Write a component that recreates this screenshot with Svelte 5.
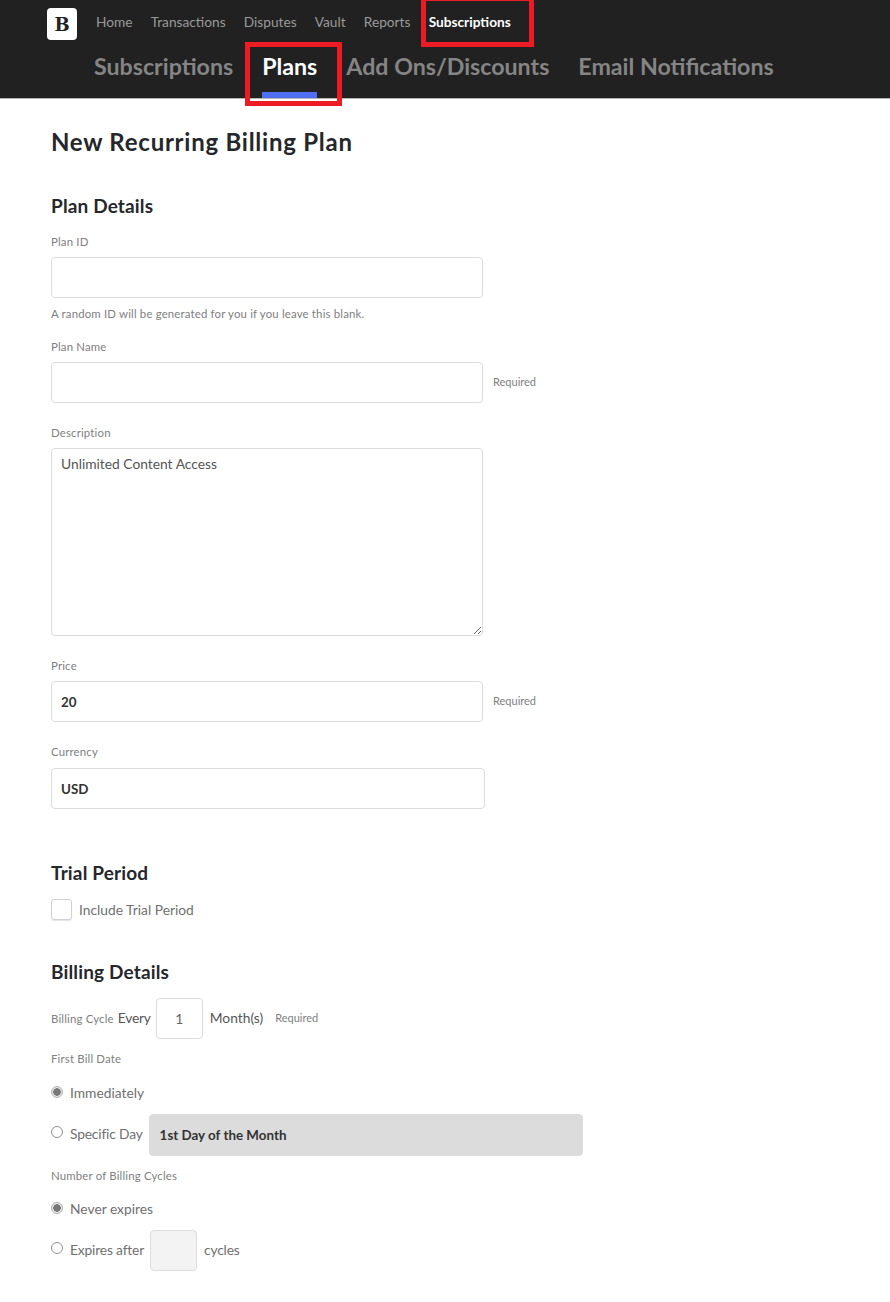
<script>
  const topLinks = ["Home", "Transactions", "Disputes", "Vault", "Reports", "Subscriptions"];
  const tabs = ["Subscriptions", "Plans", "Add Ons/Discounts", "Email Notifications"];
</script>

<header class="header">
  <div class="top-row">
    <div class="logo">B</div>
    <nav class="top-nav">
      {#each topLinks as link}
        <a href="#top" class:active={link === "Subscriptions"}>{link}</a>
      {/each}
    </nav>
  </div>
  <nav class="tabs">
    {#each tabs as tab}
      <a href="#top" class:active={tab === "Plans"}>{tab}</a>
    {/each}
  </nav>
  <!-- annotation boxes drawn over the screenshot -->
  <div class="mark mark-sub"></div>
  <div class="mark mark-plans"></div>
</header>

<main class="page">
  <h1>New Recurring Billing Plan</h1>

  <h2 class="plan-details">Plan Details</h2>
  <label class="label first" for="plan-id">Plan ID</label>
  <input id="plan-id" class="text" type="text" />
  <p class="hint">A random ID will be generated for you if you leave this blank.</p>

  <label class="label name" for="plan-name">Plan Name</label>
  <div class="with-note">
    <input id="plan-name" class="text" type="text" />
    <span class="note">Required</span>
  </div>

  <label class="label desc" for="desc">Description</label>
  <textarea id="desc" class="area">Unlimited Content Access</textarea>

  <label class="label price" for="price">Price</label>
  <div class="with-note">
    <input id="price" class="text strong" type="text" value="20" />
    <span class="note">Required</span>
  </div>

  <label class="label currency" for="currency">Currency</label>
  <select id="currency" class="select">
    <option>USD</option>
  </select>

  <h2 class="trial">Trial Period</h2>
  <div class="check-row">
    <span class="checkbox"></span>
    <span class="opt">Include Trial Period</span>
  </div>

  <h2 class="billing">Billing Details</h2>
  <div class="cycle-row">
    <span class="label inline">Billing Cycle</span>
    <span class="opt every">Every</span>
    <input class="small" type="text" value="1" />
    <span class="opt months">Month(s)</span>
    <span class="note">Required</span>
  </div>

  <div class="label group first-bill">First Bill Date</div>
  <div class="radio-row imm">
    <span class="radio on"></span>
    <span class="opt">Immediately</span>
  </div>
  <div class="radio-row specific">
    <span class="radio"></span>
    <span class="opt">Specific Day</span>
    <select class="select day" disabled>
      <option>1st Day of the Month</option>
    </select>
  </div>

  <div class="label group num-cycles">Number of Billing Cycles</div>
  <div class="radio-row never">
    <span class="radio on"></span>
    <span class="opt">Never expires</span>
  </div>
  <div class="radio-row expires">
    <span class="radio"></span>
    <span class="opt">Expires after</span>
    <input class="small off" type="text" disabled />
    <span class="opt cycles">cycles</span>
  </div>
</main>

<style>
  :global(body) {
    margin: 0;
    background: #fff;
    font-family: Lato, "Liberation Sans", sans-serif;
    color: #222;
  }

  .header {
    position: relative;
    height: 98px;
    background: #212121;
    border-bottom: 1px solid #b5b5b5;
  }

  .top-row {
    display: flex;
    align-items: flex-start;
    padding: 8px 0 0 47px;
    height: 32px;
  }

  .logo {
    width: 30px;
    height: 32px;
    background: #fff;
    border-radius: 4px;
    color: #222;
    font: 700 18px/33px "DejaVu Serif", serif;
    text-align: center;
  }

  .top-nav {
    display: flex;
    gap: 18.2px;
    margin-left: 19px;
    height: 26px;
    align-items: center;
  }

  .top-nav a {
    color: #9a9a9a;
    font-size: 13.7px;
    text-decoration: none;
  }

  .top-nav a.active {
    color: #fff;
    font-weight: 700;
  }

  .tabs {
    position: relative;
    display: flex;
    gap: 29px;
    padding: 0 0 0 94px;
    margin-top: 12px;
    height: 46px;
    box-sizing: border-box;
  }

  .tabs a {
    color: #858585;
    font-size: 23.2px;
    font-weight: 700;
    line-height: 29px;
    text-decoration: none;
    height: 46px;
    box-sizing: border-box;
  }

  .tabs a.active {
    color: #fff;
    border-bottom: 6px solid #4f6ef2;
  }

  .mark {
    position: absolute;
    box-sizing: border-box;
    border: 5px solid #ed1c24;
  }

  .mark-sub {
    left: 421px;
    top: -4px;
    width: 113px;
    height: 51px;
  }

  .mark-plans {
    left: 245px;
    top: 42px;
    width: 97px;
    height: 64px;
  }

  .page {
    padding: 0 0 30px 51px;
  }

  h1 {
    margin: 0;
    padding-top: 28px;
    font-size: 24px;
    line-height: 30px;
    font-weight: 700;
    color: #25272b;
    letter-spacing: 0.75px;
  }

  h2 {
    margin: 0;
    font-size: 19px;
    line-height: 24px;
    font-weight: 700;
    color: #25272b;
    letter-spacing: 0.15px;
  }

  .plan-details {
    margin-top: 37px;
  }

  .label {
    display: block;
    font-size: 11.4px;
    letter-spacing: 0.17px;
    line-height: 14px;
    color: #808080;
  }

  .first {
    margin-top: 17px;
    margin-bottom: 8px;
  }

  .name {
    margin-top: 19px;
    margin-bottom: 8px;
  }

  .desc {
    margin-top: 23px;
    margin-bottom: 8px;
  }

  .price {
    margin-top: 23px;
    margin-bottom: 8px;
  }

  .currency {
    margin-top: 23px;
    margin-bottom: 9px;
  }

  .text,
  .area,
  .select {
    display: block;
    box-sizing: border-box;
    border: 1px solid #dcdcdc;
    border-radius: 4px;
    background: #fff;
    font-family: inherit;
    font-size: 13.4px;
    color: #333;
    outline: none;
    padding: 0 9px;
    margin: 0;
  }

  .text {
    width: 432px;
    height: 41px;
  }

  .strong {
    font-weight: 700;
  }

  .area {
    width: 432px;
    height: 188px;
    padding: 7px 9px;
    font-size: 13.8px;
    line-height: 16px;
    color: #555;
    resize: vertical;
  }

  .select {
    appearance: none;
    width: 434px;
    height: 41px;
    font-weight: 700;
  }

  .hint {
    margin: 9px 0 0;
    font-size: 11.4px;
    letter-spacing: 0.17px;
    line-height: 14px;
    color: #808080;
  }

  .with-note {
    display: flex;
    align-items: center;
    gap: 10px;
  }

  .note {
    font-size: 11px;
    color: #808080;
    margin-top: -2px;
  }

  .trial {
    margin-top: 52px;
  }

  .check-row {
    display: flex;
    align-items: center;
    margin-top: 14px;
    height: 21px;
  }

  .checkbox {
    box-sizing: border-box;
    width: 21px;
    height: 21px;
    border: 1px solid #d0d0d0;
    border-radius: 3px;
    box-shadow: 0 1px 1px #e5e5e5;
  }

  .opt {
    font-size: 13.8px;
    color: #707070;
  }

  .check-row .opt {
    margin-left: 7px;
  }

  .billing {
    margin-top: 40px;
  }

  .cycle-row {
    display: flex;
    align-items: center;
    margin-top: 14px;
    height: 41px;
  }

  .inline {
    display: inline;
  }

  .every {
    margin-left: 4px;
    margin-top: -2px;
    color: #555;
    letter-spacing: -0.2px;
  }

  .small {
    box-sizing: border-box;
    width: 47px;
    height: 41px;
    margin: 0;
    padding: 0;
    border: 1px solid #dcdcdc;
    border-radius: 4px;
    background: #fff;
    font-family: inherit;
    font-size: 13.8px;
    color: #666;
    text-align: center;
    outline: none;
  }

  .cycle-row .small {
    margin-left: 5px;
  }

  .months {
    margin-left: 7px;
    margin-right: 12px;
    margin-top: -2px;
    color: #555;
  }

  .group {
    margin-bottom: 0;
  }

  .first-bill {
    margin-top: 13px;
  }

  .radio-row {
    display: flex;
    align-items: center;
  }

  .radio-row .opt {
    margin-top: -2px;
  }

  .imm {
    margin-top: 17px;
    height: 20px;
  }

  .specific {
    margin-top: 11px;
    height: 42px;
  }

  .specific > .opt {
    margin-top: -4px;
    letter-spacing: -0.17px;
  }

  .num-cycles {
    margin-top: 13px;
  }

  .never {
    margin-top: 16px;
    height: 20px;
  }

  .expires {
    margin-top: 11px;
    height: 41px;
  }

  .expires > .opt {
    letter-spacing: -0.17px;
  }

  .radio {
    box-sizing: border-box;
    width: 12px;
    height: 12px;
    margin-right: 7px;
    margin-top: -6px;
    border: 1px solid #8f8f8f;
    border-radius: 50%;
    background: #fff;
  }

  .radio.on {
    margin-top: -2px;
    border-color: #b0b0b0;
    background: radial-gradient(circle, #777 0 3.5px, #e8e8e8 4px);
  }

  .day {
    width: 434px;
    height: 42px;
    margin-left: 6px;
    background: #dcdcdc;
    border-color: #dcdcdc;
    color: #333;
    opacity: 1;
    padding-left: 10px;
  }

  .off {
    margin-left: 6px;
    background: #f3f3f3;
  }

  .cycles {
    margin-left: 7px;
  }
</style>
